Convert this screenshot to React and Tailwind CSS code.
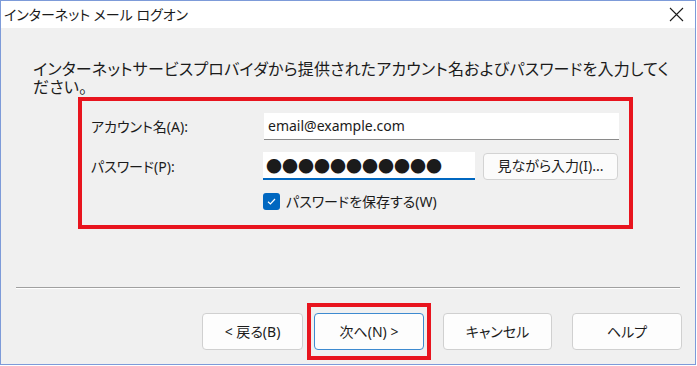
export default function App() {
  const font = "font-['Noto_Sans','Noto_Sans_CJK_JP',sans-serif] [font-feature-settings:'palt']";
  return (
    <div className={`w-[697px] h-[366px] bg-white ${font} text-[#1b1b1b]`}>
      <div className="w-[696px] h-[365px] border border-[#7d9bd9] bg-[#f0f0f0] flex flex-col">
        {/* Title bar */}
        <div className="h-[27px] bg-white flex items-center justify-between pl-[3px] pr-[11px] shrink-0">
          <span className="text-[14px] leading-none">インターネット メール ログオン</span>
          <svg width="15" height="15" viewBox="0 0 15 15" className="text-[#1b1b1b]">
            <path d="M1 1 L14 14 M14 1 L1 14" stroke="currentColor" strokeWidth="1.1" fill="none" />
          </svg>
        </div>

        {/* Body */}
        <div className="flex-1 flex flex-col">
          <div className="pl-[32px] pt-[33px] text-[16px] leading-[18px] tracking-[0.2px] font-['Liberation_Sans','Noto_Sans_CJK_JP',sans-serif]">
            <div className="whitespace-nowrap">インターネットサービスプロバイダから提供されたアカウント名およびパスワードを入力してく</div>
            <div>ださい。</div>
          </div>

          {/* Account box */}
          <div className="ml-[77px] w-[555px] h-[132px] border-[4px] border-[#e8141e] pl-[9px] pt-[11px] text-[14px]">
            <div className="flex items-center h-[28px]">
              <span className="w-[173px]">アカウント名(A):</span>
              <div className="w-[355px] h-[27px] bg-white border-b border-[#8a8a8a] flex items-center pl-[4px]">
                email@example.com
              </div>
            </div>
            <div className="flex items-center h-[28px] mt-[12px]">
              <span className="w-[172px]">パスワード(P):</span>
              <div className="w-[212px] h-[28px] bg-white border-b-2 border-[#0067c0] flex items-center pl-[3px] text-[16px] leading-none font-['Noto_Sans_CJK_JP',sans-serif]">
                ●●●●●●●●●●●
              </div>
              <button className="ml-[8px] w-[135px] h-[27px] bg-[#fbfbfb] border border-[#d3d3d3] rounded-[4px] text-[14px] leading-none">
                見ながら入力(I)...
              </button>
            </div>
            <div className="flex items-center mt-[11px] ml-[172px] gap-[6px]">
              <span className="w-[17px] h-[17px] rounded-[3px] bg-[#0067c0] flex items-center justify-center">
                <svg width="11" height="11" viewBox="0 0 11 11">
                  <path d="M2 5.8 L4.4 8 L9 3" stroke="white" strokeWidth="1.2" fill="none" />
                </svg>
              </span>
              <span>パスワードを保存する(W)</span>
            </div>
          </div>

          {/* Separator */}
          <div className="mx-[15px] mt-[58px] h-[2px] border-t border-[#a0a0a0] border-b border-b-white" />

          {/* Buttons */}
          <div className="flex items-center pl-[201px] mt-[24px] text-[14px]">
            <button className="w-[101px] h-[37px] bg-[#fdfdfd] border border-[#d0d0d0] rounded-[4px]">
              &lt; 戻る(B)
            </button>
            <div className="relative ml-[11px]">
              <button className="w-[110px] h-[37px] bg-[#fdfdfd] border border-[#3d8ad0] rounded-[4px]">
                次へ(N) &gt;
              </button>
              <span className="absolute -left-[7px] -right-[7px] -top-[10px] -bottom-[10px] border-[4px] border-[#e8141e] pointer-events-none" />
            </div>
            <button className="ml-[19px] w-[109px] h-[37px] bg-[#fdfdfd] border border-[#d0d0d0] rounded-[4px]">
              キャンセル
            </button>
            <button className="ml-[20px] w-[110px] h-[37px] bg-[#fdfdfd] border border-[#d0d0d0] rounded-[4px]">
              ヘルプ
            </button>
          </div>
        </div>
      </div>
    </div>
  );
}
